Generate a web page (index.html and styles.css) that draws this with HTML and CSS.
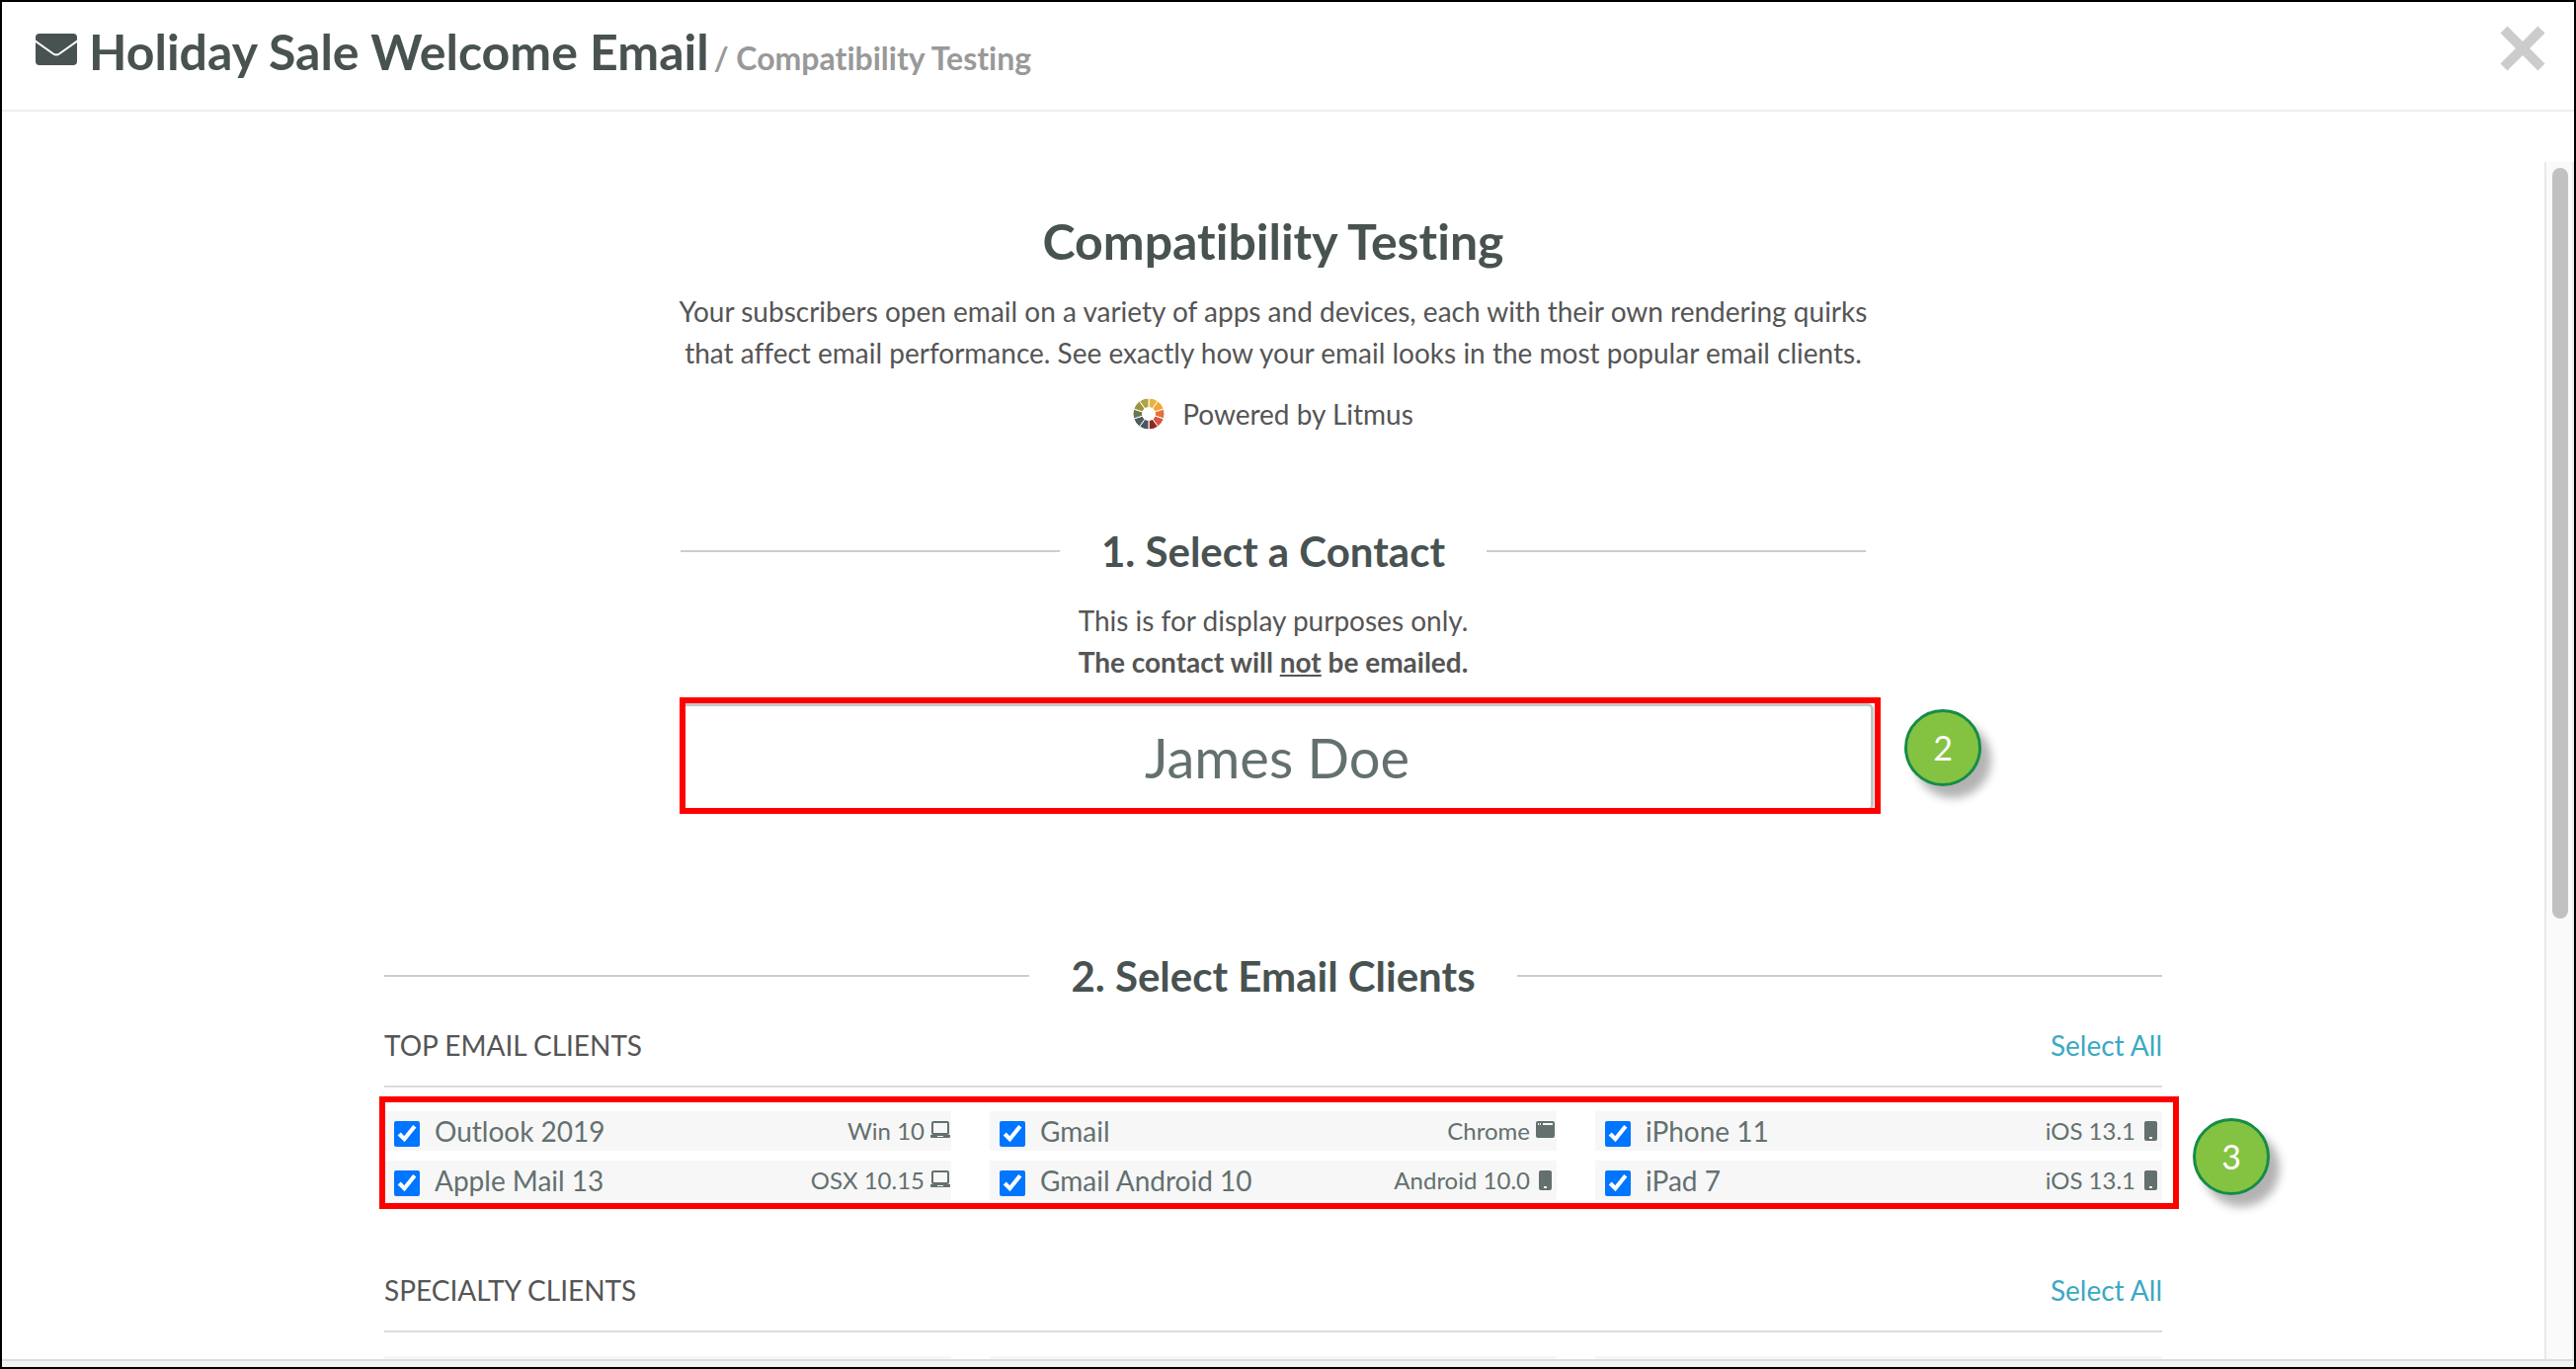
FILE: index.html
```html
<!DOCTYPE html>
<html lang="en">

<head>
  <meta charset="UTF-8">
  <meta name="viewport" content="width=device-width, initial-scale=1.0">
  <title>Compatibility Testing</title>
  <link rel="stylesheet" href="styles.css">
</head>

<body>
  <!-- shared icons -->
  <svg class="sprite" aria-hidden="true">
    <symbol id="laptop" viewBox="0 0 22 20">
      <rect x="3" y="1" width="16" height="12" rx="1" fill="none" stroke="currentColor" stroke-width="2" />
      <path d="M1 14h20v2a1 1 0 0 1-1 1H2a1 1 0 0 1-1-1z" fill="currentColor" />
      <path d="M8 15.500h6" stroke="#f7f7f7" stroke-width="1" />
    </symbol>
    <symbol id="browser" viewBox="0 0 22 20">
      <rect x="1" y="0" width="19" height="17" rx="2" fill="currentColor" />
      <path d="M3 3h1M5 3h1M8 3h10" stroke="#f7f7f7" stroke-width="2" />
    </symbol>
    <symbol id="phone" viewBox="0 0 22 20">
      <rect x="4" y="0" width="13" height="20" rx="2" fill="currentColor" />
      <rect x="9" y="16" width="3" height="2" fill="#f7f7f7" />
    </symbol>
  </svg>

  <div class="modal">
    <header class="topbar">
      <svg class="envelope" viewBox="0 0 42 32" aria-hidden="true">
        <rect width="42" height="32" rx="4" fill="#485251" />
        <path d="M-1 7L18 20.500Q21 22.500 24 20.500L43 7" fill="none" stroke="#fff" stroke-width="2" />
      </svg>
      <h1>Holiday Sale Welcome Email<small>/ Compatibility Testing</small></h1>
      <button type="button" class="closeBtn" aria-label="Close">
        <svg viewBox="0 0 46 46" aria-hidden="true">
          <path d="M4 4L42 42M42 4L4 42" stroke="#ccc" stroke-width="10" />
        </svg>
      </button>
    </header>

    <div class="pane">
      <main class="content">
        <div class="narrow">
          <h2>Compatibility Testing</h2>
          <p class="intro">Your subscribers open email on a variety of apps and devices, each with their own rendering quirks<br>
            that affect email performance. See exactly how your email looks in the most popular email clients.</p>
          <div class="powered">
            <svg class="litmus" viewBox="-16 -16 32 32" aria-hidden="true">
              <g id="wheel"></g>
              <circle r="7" fill="#fff" />
            </svg>
            <span>Powered by Litmus</span>
          </div>

          <h3 class="ruled">1. Select a Contact</h3>
          <p><label for="contact">This is for display purposes only.<br>
              <b>The contact will <u>not</u> be emailed.</b></label></p>
          <div class="contact">
            <input type="text" id="contact" value="James Doe">
            <div class="outline"></div>
            <span class="badge">2</span>
          </div>
        </div>

        <div class="wide">
          <h3 class="ruled">2. Select Email Clients</h3>
          <section class="group">
            <div class="groupHead">
              <h4>TOP EMAIL CLIENTS</h4>
              <a href="#top">Select All</a>
            </div>
            <div class="clients" id="top">
              <label class="client"><input type="checkbox" checked><span>Outlook 2019</span>
                <small>Win 10 <svg><use href="#laptop" /></svg></small></label>
              <label class="client"><input type="checkbox" checked><span>Gmail</span>
                <small>Chrome <svg><use href="#browser" /></svg></small></label>
              <label class="client"><input type="checkbox" checked><span>iPhone 11</span>
                <small>iOS 13.1 <svg><use href="#phone" /></svg></small></label>
              <label class="client"><input type="checkbox" checked><span>Apple Mail 13</span>
                <small>OSX 10.15 <svg><use href="#laptop" /></svg></small></label>
              <label class="client"><input type="checkbox" checked><span>Gmail Android 10</span>
                <small>Android 10.0 <svg><use href="#phone" /></svg></small></label>
              <label class="client"><input type="checkbox" checked><span>iPad 7</span>
                <small>iOS 13.1 <svg><use href="#phone" /></svg></small></label>
              <div class="outline"></div>
              <span class="badge">3</span>
            </div>
          </section>
          <section class="group">
            <div class="groupHead">
              <h4>SPECIALTY CLIENTS</h4>
              <a href="#specialty">Select All</a>
            </div>
            <div class="clients" id="specialty">
              <div class="client"></div>
              <div class="client"></div>
              <div class="client"></div>
            </div>
          </section>
        </div>
      </main>
      <div class="scrollTrack">
        <div class="scrollThumb"></div>
      </div>
    </div>
    <footer class="bottombar"></footer>
  </div>

  <script>
    // litmus color wheel, clockwise from 12 o'clock
    const colors = ["#e4b53c", "#f3a536", "#e8703c", "#d9553f", "#8c2b22", "#4a5763", "#4b5f5c", "#67794f", "#9a963f", "#b0a345"]
    const wheel = document.querySelector("#wheel")
    const step = 2 * Math.PI / colors.length
    for (let i = 0; i < colors.length; i++) {
      let a = i * step
      let b = a + step
      let path = document.createElementNS("http://www.w3.org/2000/svg", "path")
      path.setAttribute("d", `M0 0L${16 * Math.sin(a)} ${-16 * Math.cos(a)}A16 16 0 0 1 ${16 * Math.sin(b)} ${-16 * Math.cos(b)}Z`)
      path.setAttribute("fill", colors[i])
      path.setAttribute("stroke", "#fff")
      wheel.appendChild(path)
    }
  </script>
</body>

</html>
```
FILE: styles.css
```css
* {
  padding: 0;
  margin: 0;
  box-sizing: border-box;
}

body {
  font-family: Lato, "Liberation Sans", sans-serif;
  font-size: 28px;
  line-height: 42px;
  font-variant-ligatures: none;
  color: #555;
  background-color: #fff;
}

.sprite {
  display: none;
}

.modal {
  height: 100vh;
  border: 2px solid #000;
  display: flex;
  flex-direction: column;
}

.topbar {
  display: flex;
  align-items: flex-start;
  padding: 20px 29px 29px 34px;
  border-bottom: 2px solid #ededed;
}

.envelope {
  width: 42px;
  height: 32px;
  margin-top: 12px;
}

h1 {
  flex: 1;
  margin-left: 12px;
  font-size: 50px;
  line-height: 60px;
  color: #485251;
}

h1 small {
  margin-left: 5px;
  font-size: 32px;
  line-height: 32px;
  color: #999;
}

.closeBtn {
  width: 46px;
  height: 46px;
  margin-top: 4px;
  border: none;
  background: none;
  cursor: pointer;
}

.closeBtn svg {
  display: block;
  width: 46px;
  height: 46px;
}

.pane {
  flex: 1;
  min-height: 0;
  margin-top: 51px;
  display: flex;
}

.content {
  flex: 1;
  overflow: hidden;
  padding-top: 50px;
  text-align: center;
}

.narrow {
  max-width: 1200px;
  margin: 0 auto;
}

.wide {
  max-width: 1800px;
  margin: 0 auto;
}

h2 {
  margin-bottom: 20px;
  font-size: 50px;
  line-height: 60px;
  color: #485251;
}

.intro {
  margin: 0 -20px;
}

.powered {
  margin: 20px 0 93px;
  display: flex;
  justify-content: center;
  align-items: center;
  gap: 18px;
}

.litmus {
  width: 32px;
  height: 32px;
}

.ruled {
  display: flex;
  align-items: center;
  gap: 42px;
  margin-bottom: 24px;
  font-size: 42px;
  line-height: 50px;
  color: #485251;
}

.ruled::before,
.ruled::after {
  content: "";
  flex: 1;
  border-top: 2px solid #ccc;
}

.contact {
  position: relative;
  margin: 21px -8px 142px 0;
}

.contact input {
  display: block;
  width: 100%;
  height: 109px;
  border: 3px solid #c4c9c8;
  border-radius: 6px;
  font-family: inherit;
  font-size: 56px;
  text-align: center;
  color: #63706f;
  background-color: #fff;
}

/* tutorial markers */
.outline {
  position: absolute;
  border: 6px solid #f00;
  pointer-events: none;
}

.contact .outline {
  inset: -6px -7px -3px -1px;
}

.clients .outline {
  inset: -15px -17px -9px -5px;
}

.badge {
  position: absolute;
  width: 78px;
  height: 78px;
  border: 3px solid #168c47;
  border-radius: 50%;
  background-color: #84c341;
  box-shadow: 10px 12px 10px rgba(0, 0, 0, 0.3);
  font-size: 34px;
  line-height: 72px;
  text-align: center;
  color: #fff;
}

.contact .badge {
  top: 6px;
  right: -109px;
}

.clients .badge {
  top: 7px;
  right: -109px;
}

.group {
  margin-bottom: 70px;
}

.groupHead {
  display: flex;
  justify-content: space-between;
  padding-bottom: 20px;
  border-bottom: 2px solid #d8dcdc;
}

h4 {
  font-size: 28px;
  font-weight: normal;
}

a {
  color: #3ba9c3;
  text-decoration: none;
}

.clients {
  position: relative;
  margin-top: 24px;
  display: grid;
  grid-template-columns: repeat(3, 1fr);
  gap: 10px 39px;
}

.client {
  height: 40px;
  padding-left: 10px;
  display: flex;
  align-items: center;
  color: #63706f;
  background-color: #f7f7f7;
}

.client input {
  width: 26px;
  height: 26px;
  margin: 6px 15px 0 0;
}

.client small {
  margin-left: auto;
  display: flex;
  align-items: center;
  gap: 5px;
  font-size: 24px;
}

.client svg {
  width: 22px;
  height: 20px;
}

.scrollTrack {
  width: 30px;
  padding: 6px 4px 0 6px;
  border-left: 2px solid #e8e8e8;
  border-right: 2px solid #ededed;
  background-color: #fafafa;
}

.scrollThumb {
  width: 16px;
  height: 63%;
  border-radius: 8px;
  background-color: #c1c1c1;
}

.bottombar {
  height: 8px;
  border-top: 2px solid #ddd;
  background-color: #f3f3f3;
}
```
